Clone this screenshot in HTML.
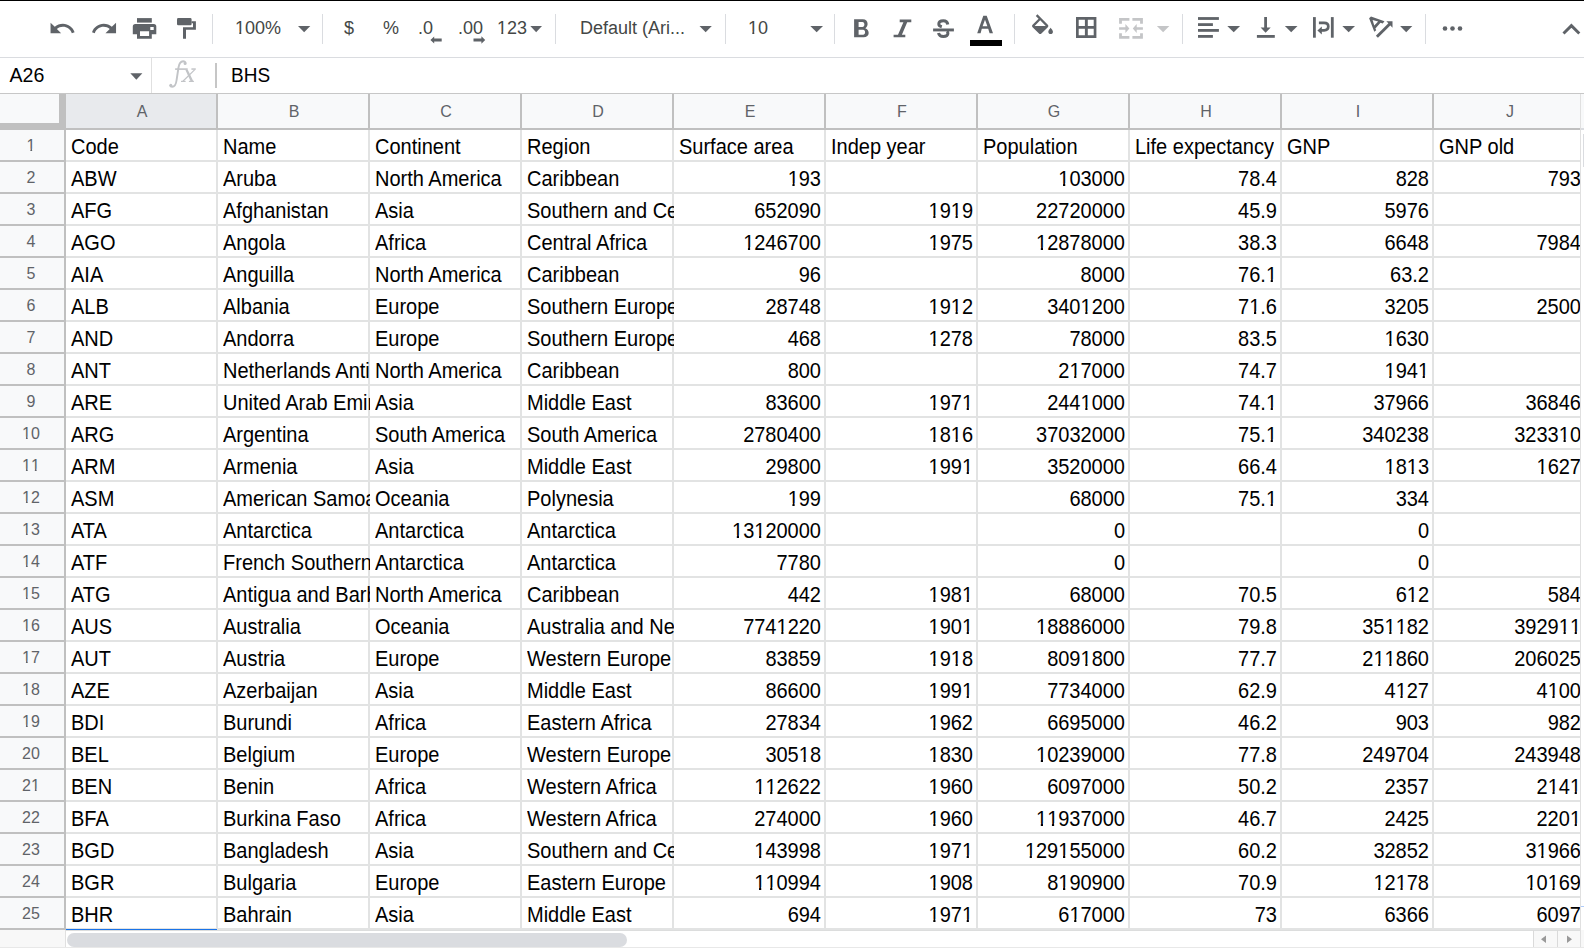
<!DOCTYPE html><html><head><meta charset="utf-8"><style>
*{margin:0;padding:0;box-sizing:border-box}
html,body{width:1584px;height:948px;overflow:hidden;background:#fff}
body{position:relative;font-family:"Liberation Sans",sans-serif;color:#000}
.a{position:absolute}
.tt{position:absolute;font-size:18px;color:#444746;line-height:20px;white-space:nowrap}
.c{position:absolute;height:30px;line-height:30px;padding:2px 3px 0 5px;font-size:20px;white-space:nowrap;overflow:hidden;transform:scaleY(1.07);transform-origin:0 24px}
.r{text-align:right}
.ch{position:absolute;top:95px;height:34px;line-height:34px;width:150px;text-align:center;font-size:16px;color:#5f6368}
.one{display:inline-block;clip-path:polygon(0 0,100% 0,100% var(--b),0.35em var(--b),0.35em 100%,0.24em 100%,0.24em var(--b),0 var(--b))}
.rh .one{--b:17.7px}
.tt .one{--b:13.8px}
.c .one{--b:19.5px}
.rh{position:absolute;left:0;width:62px;height:30px;line-height:30px;padding-top:1px;text-align:center;font-size:16px;color:#5f6368}
</style></head><body>
<div class="a" style="left:0;top:0;width:1584px;height:1px;background:#000"></div>
<div class="a" style="left:0;top:57px;width:1584px;height:1px;background:#dadce0"></div>
<svg class="a" style="left:0;top:0" width="1584" height="57" viewBox="0 0 1584 57" fill="#5f6368">
<rect x="212" y="14" width="1" height="30" fill="#dadce0"/>
<rect x="322" y="14" width="1" height="30" fill="#dadce0"/>
<rect x="555" y="14" width="1" height="30" fill="#dadce0"/>
<rect x="725" y="14" width="1" height="30" fill="#dadce0"/>
<rect x="834" y="14" width="1" height="30" fill="#dadce0"/>
<rect x="1014" y="14" width="1" height="30" fill="#dadce0"/>
<rect x="1182" y="14" width="1" height="30" fill="#dadce0"/>
<rect x="1425" y="14" width="1" height="30" fill="#dadce0"/>
<path transform="translate(48.2,14.4) scale(1.175)" d="M12.5 8c-2.65 0-5.05.99-6.9 2.6L2 7v9h9l-3.62-3.62c1.39-1.16 3.16-1.88 5.12-1.88 3.54 0 6.55 2.31 7.6 5.5l2.37-.78C21.08 11.03 17.15 8 12.5 8z"/>
<path transform="translate(90.2,14.4) scale(1.175)" d="M18.4 10.6C16.55 8.99 14.15 8 11.5 8c-4.65 0-8.58 3.03-9.96 7.22L3.9 16c1.05-3.19 4.05-5.5 7.6-5.5 1.95 0 3.73.72 5.12 1.88L13 16h9V7l-3.6 3.6z"/>
<rect x="137" y="18.1" width="14.8" height="4.5"/>
<path fill-rule="evenodd" d="M135.3,24 H153.8 Q156.3,24 156.3,26.5 V34.2 H151.8 V38.8 H137 V34.2 H132.8 V26.5 Q132.8,24 135.3,24 Z M140,31.2 V36.1 H149.1 V31.2 Z M150.3,27 V30 H153.7 V27 Z"/>
<rect x="177" y="18.1" width="14.6" height="7.1" rx="1.3"/>
<path d="M191.5,21.2 H195.9 V29.8 H186 V38.8 H183 V27.2 H193 V23.2 H191.5 Z"/>
<path d="M298,26.1 H310.3 L304.15,32.3 Z"/>
<path d="M530.3,26.1 H542 L536.15,32.3 Z"/>
<path d="M699.5,26.1 H711.8 L705.65,32.3 Z"/>
<path d="M810.3,26.1 H823 L816.65,32.3 Z"/>
<path d="M441.7,38.5 H434.2 V36.4 L430.4,40 L434.2,43.6 V41.5 H441.7 Z"/>
<path d="M473.5,38.5 H481.4 V36.2 L485.2,40 L481.4,43.8 V41.5 H473.5 Z"/>
<path fill-rule="evenodd" d="M854.1,19.3 H862.8 C865.8,19.3 867.6,21.3 867.6,24 C867.6,25.9 866.6,27.3 865.3,28.2 C867.3,28.9 868.7,30.8 868.7,33 C868.7,35.6 866.7,37.3 863.6,37.3 H854.1 Z M858.6,22 V27 H862.5 C863.6,27 864.4,26 864.4,24.5 C864.4,23 863.6,22 862.5,22 Z M858.6,29.8 V34.7 H863.1 C864.3,34.7 865.1,33.7 865.1,32.25 C865.1,30.8 864.3,29.8 863.1,29.8 Z"/>
<path d="M899.7,19.6 H911.3 V22.3 H907.2 L901.9,34.7 H905.3 V37.3 H893.6 V34.7 H898 L903.4,22.3 H899.7 Z"/>
<rect x="933.1" y="28.5" width="20.8" height="2.9"/>
<path fill="none" stroke="#5f6368" stroke-width="3" d="M947.8,24.4 C947.4,21.8 945.6,20.7 943.3,20.7 C940.6,20.7 938.8,22 938.8,23.9 C938.8,25.3 939.8,26.2 941.8,26.8"/>
<path fill="none" stroke="#5f6368" stroke-width="3" d="M938.5,33 C939,35.4 941,36.5 943.3,36.5 C946.2,36.5 947.9,35.3 947.9,33.3 C947.9,32.4 947.6,31.7 947,31.2"/>
<path fill-rule="evenodd" d="M983.3,15.7 H986.7 L993,33.2 H989.6 L988.2,28.8 H981.8 L980.6,33.2 H977.2 Z M982.6,26.2 H987.4 L985,19.7 Z"/>
<rect x="970" y="40" width="32" height="6" fill="#000"/>
<path transform="translate(1028.6,14.3) scale(1.16)" d="M16.56 8.94L7.62 0 6.21 1.41l2.38 2.38-5.15 5.15c-.59.59-.59 1.54 0 2.12l5.5 5.5c.29.29.68.44 1.06.44s.77-.15 1.06-.44l5.5-5.5c.59-.58.59-1.53 0-2.12zM5.21 10L10 5.21 14.79 10H5.21zM19 11.5s-2 2.17-2 3.5c0 1.1.9 2 2 2s2-.9 2-2c0-1.33-2-3.5-2-3.5z"/>
<path fill-rule="evenodd" d="M1076,17.1 H1096.4 V37.9 H1076 Z M1078.7,19.8 V26 H1084.9 V19.8 Z M1087.8,19.8 V26 H1093.7 V19.8 Z M1078.7,28.8 V35.2 H1084.9 V28.8 Z M1087.8,28.8 V35.2 H1093.7 V28.8 Z"/>
<g fill="#c4c5c7">
<path d="M1119.1,18.1 H1129.4 V20.7 H1121.9 V23.7 H1119.1 Z"/>
<path d="M1142.9,18.1 H1132.4 V20.7 H1140.1 V23.7 H1142.9 Z"/>
<path d="M1119.1,38.7 H1129.4 V36.1 H1121.9 V33.2 H1119.1 Z"/>
<path d="M1142.9,38.7 H1132.4 V36.1 H1140.1 V33.2 H1142.9 Z"/>
<path d="M1119.1,27.2 H1125.4 V23.9 L1129.4,28.5 L1125.4,32.9 V29.8 H1119.1 Z"/>
<path d="M1142.9,27.2 H1136.7 V23.9 L1132.8,28.5 L1136.7,32.9 V29.8 H1142.9 Z"/>
</g>
<path fill="#c4c5c7" d="M1156.9,26.1 H1169.4 L1163.15,32.3 Z"/>
<rect x="1198" y="17.1" width="20.9" height="2.8"/>
<rect x="1198" y="23.2" width="14.9" height="2.8"/>
<rect x="1198" y="29" width="20.9" height="2.8"/>
<rect x="1198" y="35" width="14.9" height="2.8"/>
<path d="M1227.3,26.1 H1240.1 L1233.6999999999998,32.3 Z"/>
<path d="M1264.2,17.1 H1267 V27.4 H1270.7 L1265.6,32.7 L1260.6,27.4 H1264.2 Z"/>
<rect x="1256.9" y="35" width="17.9" height="2.8"/>
<path d="M1284.9,26.1 H1297.5 L1291.2,32.3 Z"/>
<rect x="1313" y="17.1" width="2.8" height="20.6"/>
<rect x="1330.9" y="17.1" width="2.8" height="20.6"/>
<path fill="none" stroke="#5f6368" stroke-width="2.7" d="M1318.9,22.85 H1324.1 C1326.9,22.85 1328.3,24.5 1328.3,26.6 C1328.3,28.7 1326.9,30.35 1324.1,30.35 H1320.5"/>
<path d="M1317.4,30.5 L1321.8,26.4 V34.6 Z"/>
<path d="M1342.3,26.1 H1355 L1348.65,32.3 Z"/>
<path fill-rule="evenodd" d="M1369.1,18.2 L1371.0,16.6 L1384.5,21.3 L1382.7,23.6 L1380.5,22.8 L1375.4,28.6 L1376.2,30.3 L1374.3,31.8 Z M1372.6,19.9 L1374.3,25.6 L1378.1,21.6 Z"/>
<path fill="none" stroke="#5f6368" stroke-width="2.9" d="M1376.9,36.8 L1390.5,23.2"/>
<path d="M1386.4,21.3 H1392.5 V27.8 Z"/>
<path d="M1400.1,26.1 H1412.3 L1406.1999999999998,32.3 Z"/>
<circle cx="1445" cy="28.5" r="2.3"/>
<circle cx="1452.5" cy="28.5" r="2.3"/>
<circle cx="1460" cy="28.5" r="2.3"/>
<path fill="none" stroke="#5f6368" stroke-width="2.9" d="M1563.5,33.5 L1571.4,25.6 L1579.3,33.5"/>
</svg>
<div class="tt" style="left:235px;top:18px"><span class="one">1</span>00%</div>
<div class="tt" style="left:344px;top:18px">$</div>
<div class="tt" style="left:383px;top:18px">%</div>
<div class="tt" style="left:418px;top:18px">.0</div>
<div class="tt" style="left:458px;top:18px">.00</div>
<div class="tt" style="left:497px;top:18px"><span class="one">1</span>23</div>
<div class="tt" style="left:580px;top:18px">Default (Ari...</div>
<div class="tt" style="left:748px;top:18px"><span class="one">1</span>0</div>
<div class="a" style="left:9.5px;top:62px;font-size:19.6px;line-height:26px;color:#000">A26</div>
<svg class="a" style="left:0;top:58px" width="1584" height="35" viewBox="0 58 1584 35"><path fill="#5f6368" d="M130.3,73.2 H142.4 L136.35,79.7 Z"/><rect x="151" y="58" width="1" height="35" fill="#e0e0e0"/><rect x="215" y="63" width="2" height="25" fill="#c6c6c6"/></svg>
<svg class="a" style="left:160px;top:58px" width="40" height="35" viewBox="160 58 40 35"><g fill="#c2c4c7"><path fill="none" stroke="#c2c4c7" stroke-width="1.9" d="M185.6,63.3 C185.3,61.8 184.2,61.2 183.1,61.2 C180.2,61.4 179,64 178.5,67.5 L176.6,80 C176.1,84 174.6,86.8 172.1,86.8 C171.1,86.8 170.4,86.3 170.3,85.6"/><circle cx="185.1" cy="63.5" r="1.5"/><circle cx="170.8" cy="85.3" r="1.5"/><rect x="175.1" y="68.3" width="12.6" height="1.6"/><path d="M185.3,69.8 L187.8,69.8 L193.3,81.3 L190.6,81.3 Z"/><path fill="none" stroke="#c2c4c7" stroke-width="1.2" d="M194.8,69.6 L182.9,81.2"/><rect x="191.4" y="68.3" width="4.4" height="1.5"/><rect x="181" y="80.8" width="4.6" height="1.2"/><rect x="188.9" y="80.8" width="5" height="1.2"/></g></svg>
<div class="a" style="left:231px;top:63px;font-size:19px;line-height:26px;color:#000;transform:scaleY(1.07);transform-origin:0 19.6px">BHS</div>
<div class="a" style="left:0;top:93px;width:1584px;height:1px;background:#c7c7c7"></div>
<div class="a" style="left:0;top:94px;width:1580px;height:34px;background:#f8f9fa"></div>
<div class="a" style="left:66px;top:94px;width:150px;height:34px;background:#e8eaed"></div>
<div class="ch" style="left:67px">A</div>
<div class="a" style="left:216px;top:94px;width:2px;height:36px;background:#c0c0c0"></div>
<div class="ch" style="left:219px">B</div>
<div class="a" style="left:368px;top:94px;width:2px;height:36px;background:#c0c0c0"></div>
<div class="ch" style="left:371px">C</div>
<div class="a" style="left:520px;top:94px;width:2px;height:36px;background:#c0c0c0"></div>
<div class="ch" style="left:523px">D</div>
<div class="a" style="left:672px;top:94px;width:2px;height:36px;background:#c0c0c0"></div>
<div class="ch" style="left:675px">E</div>
<div class="a" style="left:824px;top:94px;width:2px;height:36px;background:#c0c0c0"></div>
<div class="ch" style="left:827px">F</div>
<div class="a" style="left:976px;top:94px;width:2px;height:36px;background:#c0c0c0"></div>
<div class="ch" style="left:979px">G</div>
<div class="a" style="left:1128px;top:94px;width:2px;height:36px;background:#c0c0c0"></div>
<div class="ch" style="left:1131px">H</div>
<div class="a" style="left:1280px;top:94px;width:2px;height:36px;background:#c0c0c0"></div>
<div class="ch" style="left:1283px">I</div>
<div class="a" style="left:1432px;top:94px;width:2px;height:36px;background:#c0c0c0"></div>
<div class="ch" style="left:1435px">J</div>
<div class="a" style="left:1584px;top:94px;width:2px;height:36px;background:#c0c0c0"></div>
<div class="a" style="left:0;top:128px;width:1580px;height:2px;background:#c0c0c0"></div>
<div class="a" style="left:0;top:94px;width:59px;height:29px;background:#f8f9fa"></div>
<div class="a" style="left:59px;top:94px;width:7px;height:36px;background:#c0c0c0"></div>
<div class="a" style="left:0;top:123px;width:66px;height:7px;background:#c0c0c0"></div>
<div class="a" style="left:0;top:130px;width:64px;height:800px;background:#f8f9fa"></div>
<div class="a" style="left:64px;top:130px;width:2px;height:800px;background:#c0c0c0"></div>
<div class="a" style="left:0;top:160px;width:64px;height:2px;background:#c0c0c0"></div>
<div class="a" style="left:66px;top:160px;width:1514px;height:2px;background:#e2e3e3"></div>
<div class="a" style="left:0;top:192px;width:64px;height:2px;background:#c0c0c0"></div>
<div class="a" style="left:66px;top:192px;width:1514px;height:2px;background:#e2e3e3"></div>
<div class="a" style="left:0;top:224px;width:64px;height:2px;background:#c0c0c0"></div>
<div class="a" style="left:66px;top:224px;width:1514px;height:2px;background:#e2e3e3"></div>
<div class="a" style="left:0;top:256px;width:64px;height:2px;background:#c0c0c0"></div>
<div class="a" style="left:66px;top:256px;width:1514px;height:2px;background:#e2e3e3"></div>
<div class="a" style="left:0;top:288px;width:64px;height:2px;background:#c0c0c0"></div>
<div class="a" style="left:66px;top:288px;width:1514px;height:2px;background:#e2e3e3"></div>
<div class="a" style="left:0;top:320px;width:64px;height:2px;background:#c0c0c0"></div>
<div class="a" style="left:66px;top:320px;width:1514px;height:2px;background:#e2e3e3"></div>
<div class="a" style="left:0;top:352px;width:64px;height:2px;background:#c0c0c0"></div>
<div class="a" style="left:66px;top:352px;width:1514px;height:2px;background:#e2e3e3"></div>
<div class="a" style="left:0;top:384px;width:64px;height:2px;background:#c0c0c0"></div>
<div class="a" style="left:66px;top:384px;width:1514px;height:2px;background:#e2e3e3"></div>
<div class="a" style="left:0;top:416px;width:64px;height:2px;background:#c0c0c0"></div>
<div class="a" style="left:66px;top:416px;width:1514px;height:2px;background:#e2e3e3"></div>
<div class="a" style="left:0;top:448px;width:64px;height:2px;background:#c0c0c0"></div>
<div class="a" style="left:66px;top:448px;width:1514px;height:2px;background:#e2e3e3"></div>
<div class="a" style="left:0;top:480px;width:64px;height:2px;background:#c0c0c0"></div>
<div class="a" style="left:66px;top:480px;width:1514px;height:2px;background:#e2e3e3"></div>
<div class="a" style="left:0;top:512px;width:64px;height:2px;background:#c0c0c0"></div>
<div class="a" style="left:66px;top:512px;width:1514px;height:2px;background:#e2e3e3"></div>
<div class="a" style="left:0;top:544px;width:64px;height:2px;background:#c0c0c0"></div>
<div class="a" style="left:66px;top:544px;width:1514px;height:2px;background:#e2e3e3"></div>
<div class="a" style="left:0;top:576px;width:64px;height:2px;background:#c0c0c0"></div>
<div class="a" style="left:66px;top:576px;width:1514px;height:2px;background:#e2e3e3"></div>
<div class="a" style="left:0;top:608px;width:64px;height:2px;background:#c0c0c0"></div>
<div class="a" style="left:66px;top:608px;width:1514px;height:2px;background:#e2e3e3"></div>
<div class="a" style="left:0;top:640px;width:64px;height:2px;background:#c0c0c0"></div>
<div class="a" style="left:66px;top:640px;width:1514px;height:2px;background:#e2e3e3"></div>
<div class="a" style="left:0;top:672px;width:64px;height:2px;background:#c0c0c0"></div>
<div class="a" style="left:66px;top:672px;width:1514px;height:2px;background:#e2e3e3"></div>
<div class="a" style="left:0;top:704px;width:64px;height:2px;background:#c0c0c0"></div>
<div class="a" style="left:66px;top:704px;width:1514px;height:2px;background:#e2e3e3"></div>
<div class="a" style="left:0;top:736px;width:64px;height:2px;background:#c0c0c0"></div>
<div class="a" style="left:66px;top:736px;width:1514px;height:2px;background:#e2e3e3"></div>
<div class="a" style="left:0;top:768px;width:64px;height:2px;background:#c0c0c0"></div>
<div class="a" style="left:66px;top:768px;width:1514px;height:2px;background:#e2e3e3"></div>
<div class="a" style="left:0;top:800px;width:64px;height:2px;background:#c0c0c0"></div>
<div class="a" style="left:66px;top:800px;width:1514px;height:2px;background:#e2e3e3"></div>
<div class="a" style="left:0;top:832px;width:64px;height:2px;background:#c0c0c0"></div>
<div class="a" style="left:66px;top:832px;width:1514px;height:2px;background:#e2e3e3"></div>
<div class="a" style="left:0;top:864px;width:64px;height:2px;background:#c0c0c0"></div>
<div class="a" style="left:66px;top:864px;width:1514px;height:2px;background:#e2e3e3"></div>
<div class="a" style="left:0;top:896px;width:64px;height:2px;background:#c0c0c0"></div>
<div class="a" style="left:66px;top:896px;width:1514px;height:2px;background:#e2e3e3"></div>
<div class="a" style="left:0;top:928px;width:64px;height:2px;background:#c0c0c0"></div>
<div class="a" style="left:66px;top:928px;width:1514px;height:2px;background:#e2e3e3"></div>
<div class="a" style="left:216px;top:130px;width:2px;height:800px;background:#e2e3e3"></div>
<div class="a" style="left:368px;top:130px;width:2px;height:800px;background:#e2e3e3"></div>
<div class="a" style="left:520px;top:130px;width:2px;height:800px;background:#e2e3e3"></div>
<div class="a" style="left:672px;top:130px;width:2px;height:800px;background:#e2e3e3"></div>
<div class="a" style="left:824px;top:130px;width:2px;height:800px;background:#e2e3e3"></div>
<div class="a" style="left:976px;top:130px;width:2px;height:800px;background:#e2e3e3"></div>
<div class="a" style="left:1128px;top:130px;width:2px;height:800px;background:#e2e3e3"></div>
<div class="a" style="left:1280px;top:130px;width:2px;height:800px;background:#e2e3e3"></div>
<div class="a" style="left:1432px;top:130px;width:2px;height:800px;background:#e2e3e3"></div>
<div class="a" style="left:1584px;top:130px;width:2px;height:800px;background:#e2e3e3"></div>
<div class="rh" style="top:130px"><span class="one">1</span></div>
<div class="c" style="left:66px;top:130px;width:152px">Code</div>
<div class="c" style="left:218px;top:130px;width:152px">Name</div>
<div class="c" style="left:370px;top:130px;width:152px">Continent</div>
<div class="c" style="left:522px;top:130px;width:152px">Region</div>
<div class="c" style="left:674px;top:130px;width:152px">Surface area</div>
<div class="c" style="left:826px;top:130px;width:152px">Indep year</div>
<div class="c" style="left:978px;top:130px;width:152px">Population</div>
<div class="c" style="left:1130px;top:130px;width:152px">Life expectancy</div>
<div class="c" style="left:1282px;top:130px;width:152px">GNP</div>
<div class="c" style="left:1434px;top:130px;width:152px">GNP old</div>
<div class="rh" style="top:162px">2</div>
<div class="c" style="left:66px;top:162px;width:152px">ABW</div>
<div class="c" style="left:218px;top:162px;width:152px">Aruba</div>
<div class="c" style="left:370px;top:162px;width:152px">North America</div>
<div class="c" style="left:522px;top:162px;width:152px">Caribbean</div>
<div class="c r" style="left:674px;top:162px;width:150px"><span class="one">1</span>93</div>
<div class="c r" style="left:978px;top:162px;width:150px"><span class="one">1</span>03000</div>
<div class="c r" style="left:1130px;top:162px;width:150px">78.4</div>
<div class="c r" style="left:1282px;top:162px;width:150px">828</div>
<div class="c r" style="left:1434px;top:162px;width:150px">793</div>
<div class="rh" style="top:194px">3</div>
<div class="c" style="left:66px;top:194px;width:152px">AFG</div>
<div class="c" style="left:218px;top:194px;width:152px">Afghanistan</div>
<div class="c" style="left:370px;top:194px;width:152px">Asia</div>
<div class="c" style="left:522px;top:194px;width:152px">Southern and Central Asia</div>
<div class="c r" style="left:674px;top:194px;width:150px">652090</div>
<div class="c r" style="left:826px;top:194px;width:150px"><span class="one">1</span>9<span class="one">1</span>9</div>
<div class="c r" style="left:978px;top:194px;width:150px">22720000</div>
<div class="c r" style="left:1130px;top:194px;width:150px">45.9</div>
<div class="c r" style="left:1282px;top:194px;width:150px">5976</div>
<div class="rh" style="top:226px">4</div>
<div class="c" style="left:66px;top:226px;width:152px">AGO</div>
<div class="c" style="left:218px;top:226px;width:152px">Angola</div>
<div class="c" style="left:370px;top:226px;width:152px">Africa</div>
<div class="c" style="left:522px;top:226px;width:152px">Central Africa</div>
<div class="c r" style="left:674px;top:226px;width:150px"><span class="one">1</span>246700</div>
<div class="c r" style="left:826px;top:226px;width:150px"><span class="one">1</span>975</div>
<div class="c r" style="left:978px;top:226px;width:150px"><span class="one">1</span>2878000</div>
<div class="c r" style="left:1130px;top:226px;width:150px">38.3</div>
<div class="c r" style="left:1282px;top:226px;width:150px">6648</div>
<div class="c r" style="left:1434px;top:226px;width:150px">7984</div>
<div class="rh" style="top:258px">5</div>
<div class="c" style="left:66px;top:258px;width:152px">AIA</div>
<div class="c" style="left:218px;top:258px;width:152px">Anguilla</div>
<div class="c" style="left:370px;top:258px;width:152px">North America</div>
<div class="c" style="left:522px;top:258px;width:152px">Caribbean</div>
<div class="c r" style="left:674px;top:258px;width:150px">96</div>
<div class="c r" style="left:978px;top:258px;width:150px">8000</div>
<div class="c r" style="left:1130px;top:258px;width:150px">76.<span class="one">1</span></div>
<div class="c r" style="left:1282px;top:258px;width:150px">63.2</div>
<div class="rh" style="top:290px">6</div>
<div class="c" style="left:66px;top:290px;width:152px">ALB</div>
<div class="c" style="left:218px;top:290px;width:152px">Albania</div>
<div class="c" style="left:370px;top:290px;width:152px">Europe</div>
<div class="c" style="left:522px;top:290px;width:152px">Southern Europe</div>
<div class="c r" style="left:674px;top:290px;width:150px">28748</div>
<div class="c r" style="left:826px;top:290px;width:150px"><span class="one">1</span>9<span class="one">1</span>2</div>
<div class="c r" style="left:978px;top:290px;width:150px">340<span class="one">1</span>200</div>
<div class="c r" style="left:1130px;top:290px;width:150px">7<span class="one">1</span>.6</div>
<div class="c r" style="left:1282px;top:290px;width:150px">3205</div>
<div class="c r" style="left:1434px;top:290px;width:150px">2500</div>
<div class="rh" style="top:322px">7</div>
<div class="c" style="left:66px;top:322px;width:152px">AND</div>
<div class="c" style="left:218px;top:322px;width:152px">Andorra</div>
<div class="c" style="left:370px;top:322px;width:152px">Europe</div>
<div class="c" style="left:522px;top:322px;width:152px">Southern Europe</div>
<div class="c r" style="left:674px;top:322px;width:150px">468</div>
<div class="c r" style="left:826px;top:322px;width:150px"><span class="one">1</span>278</div>
<div class="c r" style="left:978px;top:322px;width:150px">78000</div>
<div class="c r" style="left:1130px;top:322px;width:150px">83.5</div>
<div class="c r" style="left:1282px;top:322px;width:150px"><span class="one">1</span>630</div>
<div class="rh" style="top:354px">8</div>
<div class="c" style="left:66px;top:354px;width:152px">ANT</div>
<div class="c" style="left:218px;top:354px;width:152px">Netherlands Antilles</div>
<div class="c" style="left:370px;top:354px;width:152px">North America</div>
<div class="c" style="left:522px;top:354px;width:152px">Caribbean</div>
<div class="c r" style="left:674px;top:354px;width:150px">800</div>
<div class="c r" style="left:978px;top:354px;width:150px">2<span class="one">1</span>7000</div>
<div class="c r" style="left:1130px;top:354px;width:150px">74.7</div>
<div class="c r" style="left:1282px;top:354px;width:150px"><span class="one">1</span>94<span class="one">1</span></div>
<div class="rh" style="top:386px">9</div>
<div class="c" style="left:66px;top:386px;width:152px">ARE</div>
<div class="c" style="left:218px;top:386px;width:152px">United Arab Emirates</div>
<div class="c" style="left:370px;top:386px;width:152px">Asia</div>
<div class="c" style="left:522px;top:386px;width:152px">Middle East</div>
<div class="c r" style="left:674px;top:386px;width:150px">83600</div>
<div class="c r" style="left:826px;top:386px;width:150px"><span class="one">1</span>97<span class="one">1</span></div>
<div class="c r" style="left:978px;top:386px;width:150px">244<span class="one">1</span>000</div>
<div class="c r" style="left:1130px;top:386px;width:150px">74.<span class="one">1</span></div>
<div class="c r" style="left:1282px;top:386px;width:150px">37966</div>
<div class="c r" style="left:1434px;top:386px;width:150px">36846</div>
<div class="rh" style="top:418px"><span class="one">1</span>0</div>
<div class="c" style="left:66px;top:418px;width:152px">ARG</div>
<div class="c" style="left:218px;top:418px;width:152px">Argentina</div>
<div class="c" style="left:370px;top:418px;width:152px">South America</div>
<div class="c" style="left:522px;top:418px;width:152px">South America</div>
<div class="c r" style="left:674px;top:418px;width:150px">2780400</div>
<div class="c r" style="left:826px;top:418px;width:150px"><span class="one">1</span>8<span class="one">1</span>6</div>
<div class="c r" style="left:978px;top:418px;width:150px">37032000</div>
<div class="c r" style="left:1130px;top:418px;width:150px">75.<span class="one">1</span></div>
<div class="c r" style="left:1282px;top:418px;width:150px">340238</div>
<div class="c r" style="left:1434px;top:418px;width:150px">3233<span class="one">1</span>0</div>
<div class="rh" style="top:450px"><span class="one">1</span><span class="one">1</span></div>
<div class="c" style="left:66px;top:450px;width:152px">ARM</div>
<div class="c" style="left:218px;top:450px;width:152px">Armenia</div>
<div class="c" style="left:370px;top:450px;width:152px">Asia</div>
<div class="c" style="left:522px;top:450px;width:152px">Middle East</div>
<div class="c r" style="left:674px;top:450px;width:150px">29800</div>
<div class="c r" style="left:826px;top:450px;width:150px"><span class="one">1</span>99<span class="one">1</span></div>
<div class="c r" style="left:978px;top:450px;width:150px">3520000</div>
<div class="c r" style="left:1130px;top:450px;width:150px">66.4</div>
<div class="c r" style="left:1282px;top:450px;width:150px"><span class="one">1</span>8<span class="one">1</span>3</div>
<div class="c r" style="left:1434px;top:450px;width:150px"><span class="one">1</span>627</div>
<div class="rh" style="top:482px"><span class="one">1</span>2</div>
<div class="c" style="left:66px;top:482px;width:152px">ASM</div>
<div class="c" style="left:218px;top:482px;width:152px">American Samoa</div>
<div class="c" style="left:370px;top:482px;width:152px">Oceania</div>
<div class="c" style="left:522px;top:482px;width:152px">Polynesia</div>
<div class="c r" style="left:674px;top:482px;width:150px"><span class="one">1</span>99</div>
<div class="c r" style="left:978px;top:482px;width:150px">68000</div>
<div class="c r" style="left:1130px;top:482px;width:150px">75.<span class="one">1</span></div>
<div class="c r" style="left:1282px;top:482px;width:150px">334</div>
<div class="rh" style="top:514px"><span class="one">1</span>3</div>
<div class="c" style="left:66px;top:514px;width:152px">ATA</div>
<div class="c" style="left:218px;top:514px;width:152px">Antarctica</div>
<div class="c" style="left:370px;top:514px;width:152px">Antarctica</div>
<div class="c" style="left:522px;top:514px;width:152px">Antarctica</div>
<div class="c r" style="left:674px;top:514px;width:150px"><span class="one">1</span>3<span class="one">1</span>20000</div>
<div class="c r" style="left:978px;top:514px;width:150px">0</div>
<div class="c r" style="left:1282px;top:514px;width:150px">0</div>
<div class="rh" style="top:546px"><span class="one">1</span>4</div>
<div class="c" style="left:66px;top:546px;width:152px">ATF</div>
<div class="c" style="left:218px;top:546px;width:152px">French Southern territories</div>
<div class="c" style="left:370px;top:546px;width:152px">Antarctica</div>
<div class="c" style="left:522px;top:546px;width:152px">Antarctica</div>
<div class="c r" style="left:674px;top:546px;width:150px">7780</div>
<div class="c r" style="left:978px;top:546px;width:150px">0</div>
<div class="c r" style="left:1282px;top:546px;width:150px">0</div>
<div class="rh" style="top:578px"><span class="one">1</span>5</div>
<div class="c" style="left:66px;top:578px;width:152px">ATG</div>
<div class="c" style="left:218px;top:578px;width:152px">Antigua and Barbuda</div>
<div class="c" style="left:370px;top:578px;width:152px">North America</div>
<div class="c" style="left:522px;top:578px;width:152px">Caribbean</div>
<div class="c r" style="left:674px;top:578px;width:150px">442</div>
<div class="c r" style="left:826px;top:578px;width:150px"><span class="one">1</span>98<span class="one">1</span></div>
<div class="c r" style="left:978px;top:578px;width:150px">68000</div>
<div class="c r" style="left:1130px;top:578px;width:150px">70.5</div>
<div class="c r" style="left:1282px;top:578px;width:150px">6<span class="one">1</span>2</div>
<div class="c r" style="left:1434px;top:578px;width:150px">584</div>
<div class="rh" style="top:610px"><span class="one">1</span>6</div>
<div class="c" style="left:66px;top:610px;width:152px">AUS</div>
<div class="c" style="left:218px;top:610px;width:152px">Australia</div>
<div class="c" style="left:370px;top:610px;width:152px">Oceania</div>
<div class="c" style="left:522px;top:610px;width:152px">Australia and New Zealand</div>
<div class="c r" style="left:674px;top:610px;width:150px">774<span class="one">1</span>220</div>
<div class="c r" style="left:826px;top:610px;width:150px"><span class="one">1</span>90<span class="one">1</span></div>
<div class="c r" style="left:978px;top:610px;width:150px"><span class="one">1</span>8886000</div>
<div class="c r" style="left:1130px;top:610px;width:150px">79.8</div>
<div class="c r" style="left:1282px;top:610px;width:150px">35<span class="one">1</span><span class="one">1</span>82</div>
<div class="c r" style="left:1434px;top:610px;width:150px">3929<span class="one">1</span><span class="one">1</span></div>
<div class="rh" style="top:642px"><span class="one">1</span>7</div>
<div class="c" style="left:66px;top:642px;width:152px">AUT</div>
<div class="c" style="left:218px;top:642px;width:152px">Austria</div>
<div class="c" style="left:370px;top:642px;width:152px">Europe</div>
<div class="c" style="left:522px;top:642px;width:152px">Western Europe</div>
<div class="c r" style="left:674px;top:642px;width:150px">83859</div>
<div class="c r" style="left:826px;top:642px;width:150px"><span class="one">1</span>9<span class="one">1</span>8</div>
<div class="c r" style="left:978px;top:642px;width:150px">809<span class="one">1</span>800</div>
<div class="c r" style="left:1130px;top:642px;width:150px">77.7</div>
<div class="c r" style="left:1282px;top:642px;width:150px">2<span class="one">1</span><span class="one">1</span>860</div>
<div class="c r" style="left:1434px;top:642px;width:150px">206025</div>
<div class="rh" style="top:674px"><span class="one">1</span>8</div>
<div class="c" style="left:66px;top:674px;width:152px">AZE</div>
<div class="c" style="left:218px;top:674px;width:152px">Azerbaijan</div>
<div class="c" style="left:370px;top:674px;width:152px">Asia</div>
<div class="c" style="left:522px;top:674px;width:152px">Middle East</div>
<div class="c r" style="left:674px;top:674px;width:150px">86600</div>
<div class="c r" style="left:826px;top:674px;width:150px"><span class="one">1</span>99<span class="one">1</span></div>
<div class="c r" style="left:978px;top:674px;width:150px">7734000</div>
<div class="c r" style="left:1130px;top:674px;width:150px">62.9</div>
<div class="c r" style="left:1282px;top:674px;width:150px">4<span class="one">1</span>27</div>
<div class="c r" style="left:1434px;top:674px;width:150px">4<span class="one">1</span>00</div>
<div class="rh" style="top:706px"><span class="one">1</span>9</div>
<div class="c" style="left:66px;top:706px;width:152px">BDI</div>
<div class="c" style="left:218px;top:706px;width:152px">Burundi</div>
<div class="c" style="left:370px;top:706px;width:152px">Africa</div>
<div class="c" style="left:522px;top:706px;width:152px">Eastern Africa</div>
<div class="c r" style="left:674px;top:706px;width:150px">27834</div>
<div class="c r" style="left:826px;top:706px;width:150px"><span class="one">1</span>962</div>
<div class="c r" style="left:978px;top:706px;width:150px">6695000</div>
<div class="c r" style="left:1130px;top:706px;width:150px">46.2</div>
<div class="c r" style="left:1282px;top:706px;width:150px">903</div>
<div class="c r" style="left:1434px;top:706px;width:150px">982</div>
<div class="rh" style="top:738px">20</div>
<div class="c" style="left:66px;top:738px;width:152px">BEL</div>
<div class="c" style="left:218px;top:738px;width:152px">Belgium</div>
<div class="c" style="left:370px;top:738px;width:152px">Europe</div>
<div class="c" style="left:522px;top:738px;width:152px">Western Europe</div>
<div class="c r" style="left:674px;top:738px;width:150px">305<span class="one">1</span>8</div>
<div class="c r" style="left:826px;top:738px;width:150px"><span class="one">1</span>830</div>
<div class="c r" style="left:978px;top:738px;width:150px"><span class="one">1</span>0239000</div>
<div class="c r" style="left:1130px;top:738px;width:150px">77.8</div>
<div class="c r" style="left:1282px;top:738px;width:150px">249704</div>
<div class="c r" style="left:1434px;top:738px;width:150px">243948</div>
<div class="rh" style="top:770px">2<span class="one">1</span></div>
<div class="c" style="left:66px;top:770px;width:152px">BEN</div>
<div class="c" style="left:218px;top:770px;width:152px">Benin</div>
<div class="c" style="left:370px;top:770px;width:152px">Africa</div>
<div class="c" style="left:522px;top:770px;width:152px">Western Africa</div>
<div class="c r" style="left:674px;top:770px;width:150px"><span class="one">1</span><span class="one">1</span>2622</div>
<div class="c r" style="left:826px;top:770px;width:150px"><span class="one">1</span>960</div>
<div class="c r" style="left:978px;top:770px;width:150px">6097000</div>
<div class="c r" style="left:1130px;top:770px;width:150px">50.2</div>
<div class="c r" style="left:1282px;top:770px;width:150px">2357</div>
<div class="c r" style="left:1434px;top:770px;width:150px">2<span class="one">1</span>4<span class="one">1</span></div>
<div class="rh" style="top:802px">22</div>
<div class="c" style="left:66px;top:802px;width:152px">BFA</div>
<div class="c" style="left:218px;top:802px;width:152px">Burkina Faso</div>
<div class="c" style="left:370px;top:802px;width:152px">Africa</div>
<div class="c" style="left:522px;top:802px;width:152px">Western Africa</div>
<div class="c r" style="left:674px;top:802px;width:150px">274000</div>
<div class="c r" style="left:826px;top:802px;width:150px"><span class="one">1</span>960</div>
<div class="c r" style="left:978px;top:802px;width:150px"><span class="one">1</span><span class="one">1</span>937000</div>
<div class="c r" style="left:1130px;top:802px;width:150px">46.7</div>
<div class="c r" style="left:1282px;top:802px;width:150px">2425</div>
<div class="c r" style="left:1434px;top:802px;width:150px">220<span class="one">1</span></div>
<div class="rh" style="top:834px">23</div>
<div class="c" style="left:66px;top:834px;width:152px">BGD</div>
<div class="c" style="left:218px;top:834px;width:152px">Bangladesh</div>
<div class="c" style="left:370px;top:834px;width:152px">Asia</div>
<div class="c" style="left:522px;top:834px;width:152px">Southern and Central Asia</div>
<div class="c r" style="left:674px;top:834px;width:150px"><span class="one">1</span>43998</div>
<div class="c r" style="left:826px;top:834px;width:150px"><span class="one">1</span>97<span class="one">1</span></div>
<div class="c r" style="left:978px;top:834px;width:150px"><span class="one">1</span>29<span class="one">1</span>55000</div>
<div class="c r" style="left:1130px;top:834px;width:150px">60.2</div>
<div class="c r" style="left:1282px;top:834px;width:150px">32852</div>
<div class="c r" style="left:1434px;top:834px;width:150px">3<span class="one">1</span>966</div>
<div class="rh" style="top:866px">24</div>
<div class="c" style="left:66px;top:866px;width:152px">BGR</div>
<div class="c" style="left:218px;top:866px;width:152px">Bulgaria</div>
<div class="c" style="left:370px;top:866px;width:152px">Europe</div>
<div class="c" style="left:522px;top:866px;width:152px">Eastern Europe</div>
<div class="c r" style="left:674px;top:866px;width:150px"><span class="one">1</span><span class="one">1</span>0994</div>
<div class="c r" style="left:826px;top:866px;width:150px"><span class="one">1</span>908</div>
<div class="c r" style="left:978px;top:866px;width:150px">8<span class="one">1</span>90900</div>
<div class="c r" style="left:1130px;top:866px;width:150px">70.9</div>
<div class="c r" style="left:1282px;top:866px;width:150px"><span class="one">1</span>2<span class="one">1</span>78</div>
<div class="c r" style="left:1434px;top:866px;width:150px"><span class="one">1</span>0<span class="one">1</span>69</div>
<div class="rh" style="top:898px">25</div>
<div class="c" style="left:66px;top:898px;width:152px">BHR</div>
<div class="c" style="left:218px;top:898px;width:152px">Bahrain</div>
<div class="c" style="left:370px;top:898px;width:152px">Asia</div>
<div class="c" style="left:522px;top:898px;width:152px">Middle East</div>
<div class="c r" style="left:674px;top:898px;width:150px">694</div>
<div class="c r" style="left:826px;top:898px;width:150px"><span class="one">1</span>97<span class="one">1</span></div>
<div class="c r" style="left:978px;top:898px;width:150px">6<span class="one">1</span>7000</div>
<div class="c r" style="left:1130px;top:898px;width:150px">73</div>
<div class="c r" style="left:1282px;top:898px;width:150px">6366</div>
<div class="c r" style="left:1434px;top:898px;width:150px">6097</div>
<div class="a" style="left:66px;top:929px;width:151px;height:1px;background:#1a73e8"></div>
<div class="a" style="left:66px;top:930px;width:1518px;height:1px;background:#dcdddd"></div>
<div class="a" style="left:0;top:930px;width:65px;height:17px;background:#f8f8f8"></div>
<div class="a" style="left:65px;top:930px;width:1px;height:17px;background:#e0e0e0"></div>
<div class="a" style="left:67px;top:933px;width:560px;height:14px;border-radius:7px;background:#dadce0"></div>
<div class="a" style="left:0;top:947px;width:1584px;height:1px;background:#e8e8e8"></div>
<div class="a" style="left:1533px;top:931px;width:51px;height:16px;background:#f8f8f8"></div>
<div class="a" style="left:1533px;top:930px;width:1px;height:17px;background:#dadada"></div>
<div class="a" style="left:1557px;top:930px;width:1px;height:17px;background:#dadada"></div>
<div class="a" style="left:1580px;top:930px;width:1px;height:17px;background:#dadada"></div>
<svg class="a" style="left:1533px;top:930px" width="51" height="17" viewBox="1533 930 51 17"><path fill="#999" d="M1546,935.4 V943 L1541,939.2 Z M1567,935.4 V943 L1572,939.2 Z"/></svg>
<div class="a" style="left:1580px;top:94px;width:1px;height:853px;background:#e0e0e0"></div>
<div class="a" style="left:1581px;top:94px;width:3px;height:36px;background:#f8f9fa"></div>
<div class="a" style="left:1581px;top:130px;width:3px;height:800px;background:#fff"></div>
<div class="a" style="left:1581px;top:128px;width:3px;height:2px;background:#dadce0"></div>
<div class="a" style="left:1583px;top:134px;width:1px;height:33px;background:#dadce0"></div>
<div class="a" style="left:1581px;top:930px;width:3px;height:17px;background:#f8f8f8"></div>
<div class="a" style="left:1581px;top:906px;width:3px;height:1px;background:#aecbfa"></div>
</body></html>
